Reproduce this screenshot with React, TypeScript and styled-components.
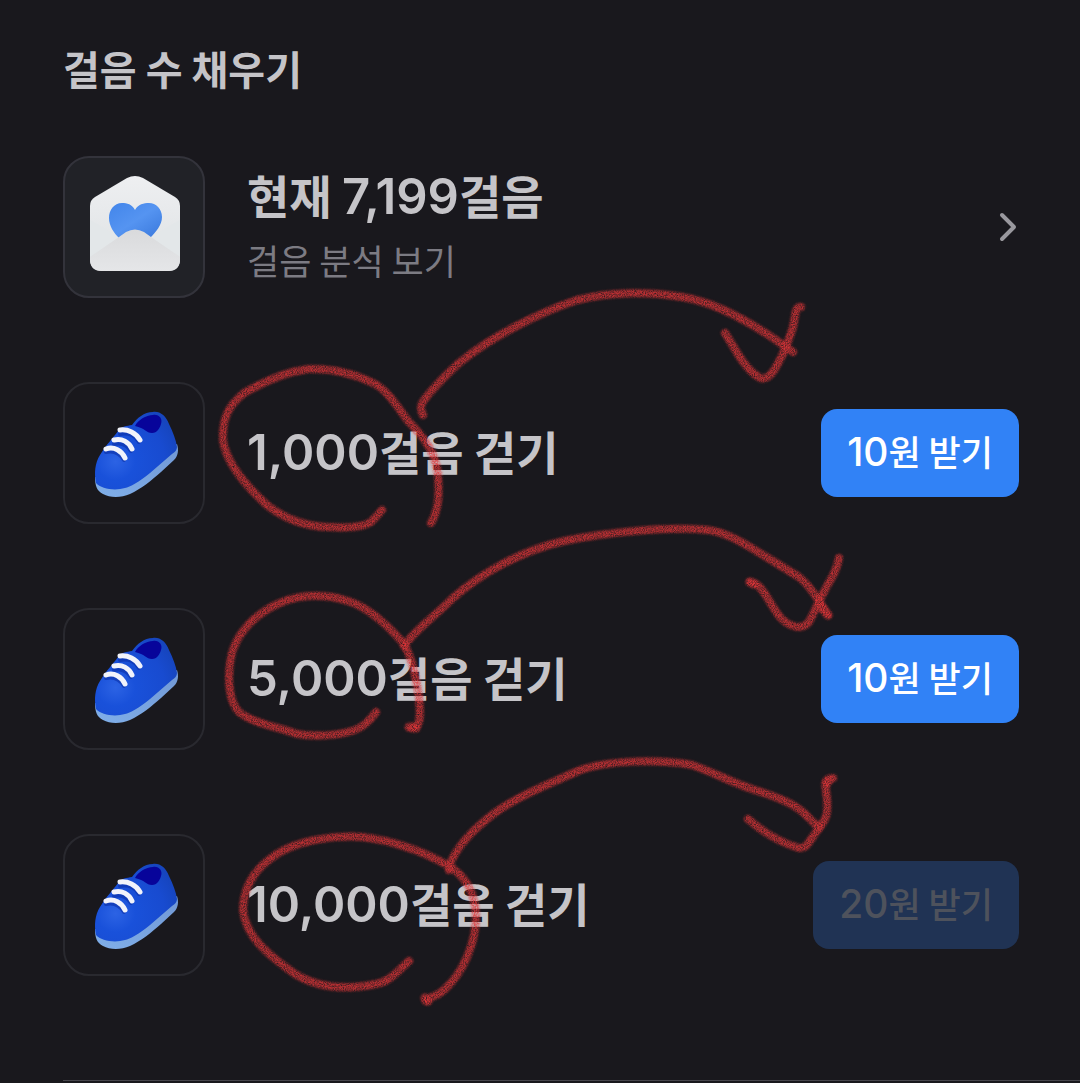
import React from "react";
import styled, { createGlobalStyle } from "styled-components";

const GlobalStyle = createGlobalStyle`
  *, *::before, *::after { box-sizing: border-box; }
  body {
    margin: 0;
    background: #19181d;
    color: #c5c4c8;
    font-family: "Noto Sans CJK KR", sans-serif;
  }
`;

const Page = styled.main`
  position: relative;
  padding: 38px 61px 0 63px;
  overflow: hidden;
`;

const Heading = styled.h1`
  margin: 0 0 58px;
  font-size: 40px;
  line-height: 60px;
  font-weight: 700;
`;

const List = styled.ul`
  display: flex;
  flex-direction: column;
  gap: 84px;
  margin: 0;
  padding: 0;
  list-style: none;
`;

const Row = styled.li`
  display: flex;
  align-items: center;
`;

const RowLink = styled.a`
  display: flex;
  flex: 1;
  align-items: center;
  color: inherit;
  text-decoration: none;
`;

const Tile = styled.span<{ $filled?: boolean }>`
  display: grid;
  place-items: center;
  flex: none;
  width: 142px;
  height: 142px;
  margin-right: 42px;
  border: 2px solid ${(p) => (p.$filled ? "#33333b" : "#29292f")};
  border-radius: 26px;
  background: ${(p) => (p.$filled ? "#212227" : "transparent")};
`;

const Texts = styled.span`
  display: flex;
  flex: 1;
  flex-direction: column;
  gap: 8px;
  padding-bottom: 6px;
`;

const Title = styled.span`
  font-size: 46px;
  line-height: 64px;
  font-weight: 700;
  white-space: nowrap;
`;

const Figure = styled.span`
  font-family: Inter, sans-serif;
  font-size: 49px;
  line-height: 1;
  font-weight: 600;
`;

const Caption = styled.span`
  color: #7c7b83;
  font-size: 35px;
  line-height: 52px;
`;

const ClaimButton = styled.button`
  height: 88px;
  padding: 0 26px 6px;
  border: 0;
  border-radius: 16px;
  background: #3182f6;
  color: #ffffff;
  font-family: "Noto Sans CJK KR", sans-serif;
  font-size: 35px;
  font-weight: 500;
  white-space: nowrap;

  &:disabled {
    background: #203354;
    color: #4e525c;
  }
`;

const ButtonFigure = styled(Figure)`
  font-size: 39px;
  font-weight: 500;
`;

const Divider = styled.hr`
  height: 2px;
  margin: 104px -61px 0 0;
  border: 0;
  border-top: 1px solid #47464c;
`;

const Ink = styled.svg`
  position: absolute;
  top: 0;
  left: 0;
  pointer-events: none;
`;

const Envelope = () => (
  <svg width="96" height="104" viewBox="-2 0 96 104" aria-hidden="true">
    <defs>
      <linearGradient id="paper" x1="0" y1="0" x2="0" y2="1">
        <stop offset="0" stopColor="#eeeff1" />
        <stop offset="1" stopColor="#dde1e3" />
      </linearGradient>
      <linearGradient id="flap" x1="0" y1="0" x2="0" y2="1">
        <stop offset="0" stopColor="#d9dadc" />
        <stop offset="1" stopColor="#e5e6e8" />
      </linearGradient>
      <linearGradient id="heart" x1="0" y1="0" x2="1" y2="1">
        <stop offset="0" stopColor="#4285ea" />
        <stop offset="0.5" stopColor="#5594f1" />
        <stop offset="1" stopColor="#3978dc" />
      </linearGradient>
    </defs>
    <path d="M2 31Q2 25 7 22L39 3Q47-1 55 3L87 22Q92 25 92 31V84Q92 96 80 96H14Q2 96 2 84Z" fill="url(#paper)" />
    <path d="M2 45L32 62L2 82Z" fill="#e3e7e9" />
    <path d="M92 45L62 62L92 82Z" fill="#e3e7e9" />
    <path d="M47 35C44 29 39 28 34 28C26 28 21 35 21 43C21 51 26 58 31 63H62C68 57 74 50 74 42C74 34 68 28 61 28C56 28 50 29 47 35Z" fill="url(#heart)" />
    <path d="M2 82L31 62L38 57Q47 52 56 57L63 62L92 82V84Q92 96 80 96H14Q2 96 2 84Z" fill="url(#flap)" />
  </svg>
);

const Shoe = () => (
  <svg width="90" height="92" viewBox="0 0 90 92" aria-hidden="true">
    <defs>
      <radialGradient id="upper" cx="0.25" cy="0.64" r="0.8">
        <stop offset="0" stopColor="#2c63e4" />
        <stop offset="0.3" stopColor="#1951da" />
        <stop offset="0.75" stopColor="#184bd0" />
        <stop offset="1" stopColor="#1645be" />
      </radialGradient>
      <linearGradient id="sole" x1="0" y1="1" x2="1" y2="0">
        <stop offset="0" stopColor="#80afe9" />
        <stop offset="1" stopColor="#7198d5" />
      </linearGradient>
    </defs>
    <path d="M6 70C6 79 8 84 14 87C21 91 32 91 41 87C52 82 63 73 72 65L85 53C89 49 90 43 88 37L60 50L20 70Z" fill="url(#sole)" />
    <path d="M7 76C5 66 6 56 11 48C17 38 24 31 29 24C32 19 38 19 43 18C48 11 55 5 64 5C71 4 77 9 80 17C84 25 87 33 88 40C88 43 86 45 83 47L61 66C50 75 41 80 36 81C26 84 12 82 7 76Z" fill="url(#upper)" />
    <path d="M46 19C49 13 57 8 64 8C70 7 74 12 72 17C71 21 68 26 63 26C57 26 56 21 46 19Z" fill="#07049a" />
    <g fill="none" stroke="#0a2fa6" strokeWidth="4" strokeLinecap="round" opacity=".6">
      <path d="M31 27C40 25 47 29 50 35" />
      <path d="M25 37C34 35 39 39 42 44" />
      <path d="M17 45C26 43 32 48 35 53" />
    </g>
    <g fill="none" stroke="#f1f3fb" strokeWidth="5" strokeLinecap="round">
      <path d="M31 23C39 22 47 26 51 33" />
      <path d="M25 33C33 31 40 35 43 42" />
      <path d="M17 42C25 39 33 44 36 51" />
    </g>
  </svg>
);

const Chevron = () => (
  <svg width="24" height="34" viewBox="0 0 24 34" aria-hidden="true">
    <path d="M7 5L19 17L7 29" fill="none" stroke="#99989e" strokeWidth="4" strokeLinecap="round" strokeLinejoin="round" />
  </svg>
);

const strokes = [
  "M431 523C440 508 439 490 438 475C436 454 425 438 409 422C398 408 388 390 373 383C353 373 332 368 308 369C286 372 263 382 244 393C228 406 222 419 223 441C227 464 248 488 268 506C284 518 304 526 327 527C345 528 362 528 371 522Q377 516 382 510",
  "M423 415C418 406 423 401 428 395C438 383 447 374 459 363C491 337 538 313 577 300C610 292 650 291 682 297C716 302 749 322 773 338L793 352",
  "M725 333C733 345 744 368 757 376C764 382 771 376 776 367C783 355 788 343 792 330C796 318 794 306 801 307",
  "M413 728C422 727 420 711 419 697C416 679 413 660 404 644C391 629 373 610 351 602C329 594 302 593 280 603C256 613 236 633 231 657C227 679 229 702 239 712C252 723 278 727 297 734C322 738 353 734 364 725Q372 718 376 712",
  "M404 646C414 631 435 616 453 598C480 574 520 551 564 541C603 533 666 526 708 530C731 533 752 549 773 561L799 577C809 585 816 596 828 615",
  "M750 582C763 583 769 604 780 617C787 625 801 632 809 622C816 609 822 594 831 579Q837 569 839 558",
  "M426 1001C428 996 434 999 444 990C464 972 476 942 476 916C475 891 465 875 447 865C423 851 390 840 362 837C334 835 293 840 270 859C249 874 243 895 243 910C246 938 270 956 295 974C320 989 347 990 376 984C389 982 397 972 409 961",
  "M449 870C450 857 465 838 480 825C506 800 545 786 578 771C607 760 658 759 692 765C718 774 734 784 761 792C779 798 796 804 808 817L819 828",
  "M748 819C765 834 782 843 799 848C807 849 809 841 817 831C828 817 828 813 827 798C825 783 823 779 833 778",
];

const dabs = [
  "M819 604L828 615",
  "M409 727L416 728",
  "M425 998L428 1001",
  "M750 582L754 584",
  "M827 783L829 780",
];

const Annotations = () => (
  <Ink width="1080" height="1083" viewBox="0 0 1080 1083" aria-hidden="true">
    <defs>
      <filter
        id="crayon"
        filterUnits="userSpaceOnUse"
        colorInterpolationFilters="sRGB"
        x="0"
        y="0"
        width="1080"
        height="1083"
      >
        <feGaussianBlur in="SourceGraphic" stdDeviation="1" result="soft" />
        <feTurbulence type="fractalNoise" baseFrequency="0.9" numOctaves="3" seed="4" result="noise" />
        <feColorMatrix in="noise" type="matrix" values="0 0 0 0 0  0 0 0 0 0  0 0 0 0 0  1.6 0 0 0 -0.05" result="grain" />
        <feComposite in="soft" in2="grain" operator="in" />
      </filter>
    </defs>
    <g filter="url(#crayon)" fill="none" stroke="#e03638" strokeLinecap="round" strokeLinejoin="round">
      {strokes.map((d) => (
        <path key={d} d={d} strokeWidth="8" strokeOpacity="0.8" />
      ))}
      {dabs.map((d) => (
        <path key={d} d={d} strokeWidth="9" strokeOpacity="0.8" />
      ))}
    </g>
  </Ink>
);

const goals = [
  { steps: "1,000", reward: "10", locked: false },
  { steps: "5,000", reward: "10", locked: false },
  { steps: "10,000", reward: "20", locked: true },
];

export default function App() {
  return (
    <>
      <GlobalStyle />
      <Page>
        <Heading>걸음 수 채우기</Heading>
        <List>
          <Row>
            <RowLink href="#analysis">
              <Tile $filled>
                <Envelope />
              </Tile>
              <Texts>
                <Title>
                  현재 <Figure>7,199</Figure>걸음
                </Title>
                <Caption>걸음 분석 보기</Caption>
              </Texts>
              <Chevron />
            </RowLink>
          </Row>
          {goals.map((goal) => (
            <Row key={goal.steps}>
              <Tile>
                <Shoe />
              </Tile>
              <Texts>
                <Title>
                  <Figure>{goal.steps}</Figure>걸음 걷기
                </Title>
              </Texts>
              <ClaimButton type="button" disabled={goal.locked}>
                <ButtonFigure>{goal.reward}</ButtonFigure>원 받기
              </ClaimButton>
            </Row>
          ))}
        </List>
        <Divider />
        <Annotations />
      </Page>
    </>
  );
}
